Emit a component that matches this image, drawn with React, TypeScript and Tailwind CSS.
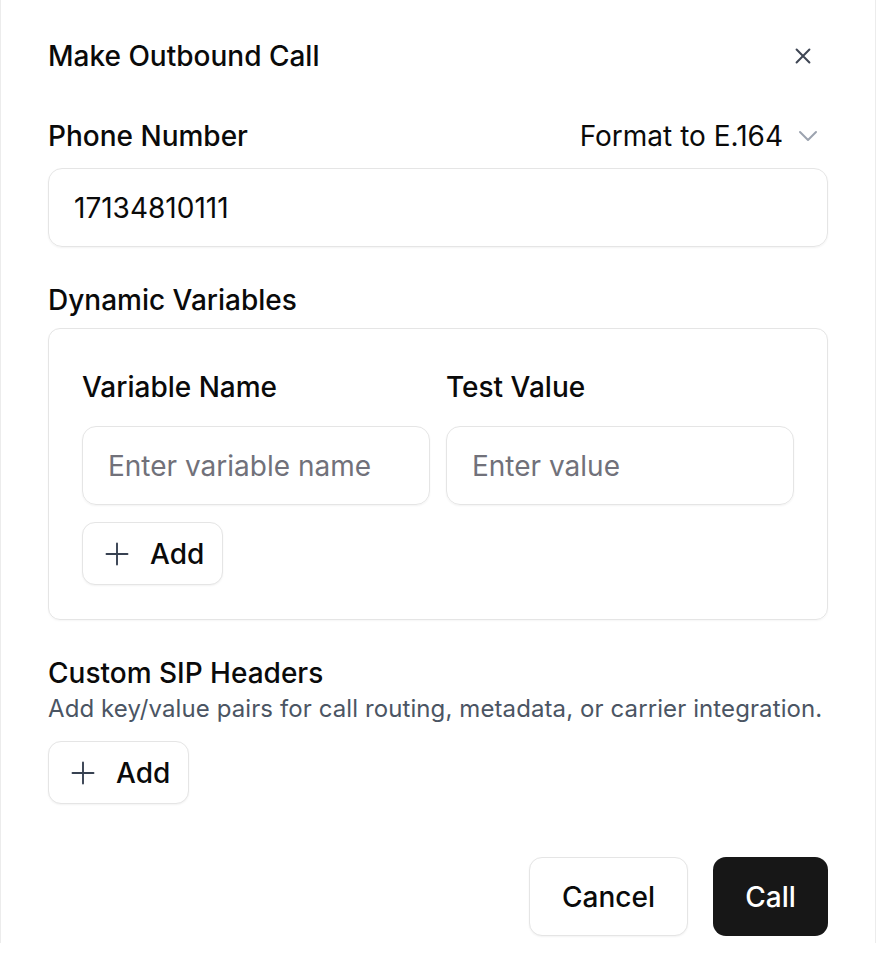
import React from "react";

function PlusIcon() {
  return (
    <svg width="24" height="24" viewBox="0 0 24 24" fill="none" stroke="#374151" strokeWidth="1.9" strokeLinecap="round">
      <path d="M12 1.5v21M1.5 12h21" />
    </svg>
  );
}

function AddButton() {
  return (
    <button className="flex h-[63px] w-[141px] items-center gap-[21px] rounded-[13px] border border-[#e5e5e5] bg-white pl-[22px] text-[28px] font-medium text-[#0a0a0a] shadow-[0_1px_2px_rgba(0,0,0,0.05)]">
      <PlusIcon />
      <span>Add</span>
    </button>
  );
}

export default function App() {
  return (
    <div
      className="h-[964px] w-[876px] bg-white"
      style={{ fontFamily: "Inter, 'Noto Sans', sans-serif" }}
    >
      <div className="h-[943px] w-[876px] border-x border-[#ececec] px-[47px] pt-[38px]">
        {/* Header */}
        <div className="flex h-[36px] items-center justify-between">
          <h1 className="text-[28px] font-medium text-[#0a0a0a]">Make Outbound Call</h1>
          <svg width="22" height="22" viewBox="0 0 24 24" fill="none" stroke="#3f4654" strokeWidth="2.2" strokeLinecap="round" className="mr-[14px]">
            <path d="M5 5l14 14M19 5L5 19" />
          </svg>
        </div>

        {/* Phone Number */}
        <div className="mt-[46px] flex h-[32px] items-center justify-between">
          <span className="text-[28px] font-medium text-[#0a0a0a]">Phone Number</span>
          <div className="flex items-center gap-[15px] pr-[10px]">
            <span className="text-[28px] text-[#0a0a0a]">Format to E.164</span>
            <svg width="20" height="12" viewBox="0 0 20 12" fill="none" stroke="#9ca3af" strokeWidth="2" strokeLinecap="round" strokeLinejoin="round">
              <path d="M2 2l8 8 8-8" />
            </svg>
          </div>
        </div>
        <div className="mt-[16px] flex h-[79px] items-center rounded-[14px] border border-[#e5e5e5] px-[25px] text-[28px] text-[#0a0a0a] shadow-[0_1px_2px_rgba(0,0,0,0.05)]">
          17134810111
        </div>

        {/* Dynamic Variables */}
        <div className="mt-[37px] flex h-[32px] items-center">
          <span className="text-[28px] font-medium text-[#0a0a0a]">Dynamic Variables</span>
        </div>
        <div className="mt-[12px] h-[292px] rounded-[12px] border border-[#e5e5e5] px-[33px] pt-[42px] shadow-[0_1px_2px_rgba(0,0,0,0.04)]">
          <div className="grid grid-cols-2 gap-[16px]">
            <div className="flex h-[32px] items-center text-[28px] font-medium text-[#0a0a0a]">Variable Name</div>
            <div className="flex h-[32px] items-center text-[28px] font-medium text-[#0a0a0a]">Test Value</div>
          </div>
          <div className="mt-[23px] grid grid-cols-2 gap-[16px]">
            <div className="flex h-[79px] items-center rounded-[14px] border border-[#e5e5e5] px-[25px] text-[28px] text-[#71717a] shadow-[0_1px_2px_rgba(0,0,0,0.05)]">
              Enter variable name
            </div>
            <div className="flex h-[79px] items-center rounded-[14px] border border-[#e5e5e5] px-[25px] text-[28px] text-[#71717a] shadow-[0_1px_2px_rgba(0,0,0,0.05)]">
              Enter value
            </div>
          </div>
          <div className="mt-[17px]">
            <AddButton />
          </div>
        </div>

        {/* Custom SIP Headers */}
        <div className="mt-[37px] flex h-[32px] items-center">
          <span className="text-[28px] font-medium text-[#0a0a0a]">Custom SIP Headers</span>
        </div>
        <p className="mt-[4px] whitespace-nowrap text-[24px] leading-[32px] tracking-[0.1px] text-[#4b5563]">
          Add key/value pairs for call routing, metadata, or carrier integration.
        </p>
        <div className="mt-[16px]">
          <AddButton />
        </div>

        {/* Footer */}
        <div className="mt-[53px] flex justify-end gap-[25px]">
          <button className="flex h-[79px] w-[159px] items-center justify-center rounded-[13px] border border-[#e5e5e5] bg-white text-[28px] font-medium text-[#0a0a0a] shadow-[0_1px_2px_rgba(0,0,0,0.05)]">
            Cancel
          </button>
          <button className="flex h-[79px] w-[115px] items-center justify-center rounded-[13px] bg-[#171717] text-[28px] font-medium text-white">
            Call
          </button>
        </div>
      </div>
    </div>
  );
}
